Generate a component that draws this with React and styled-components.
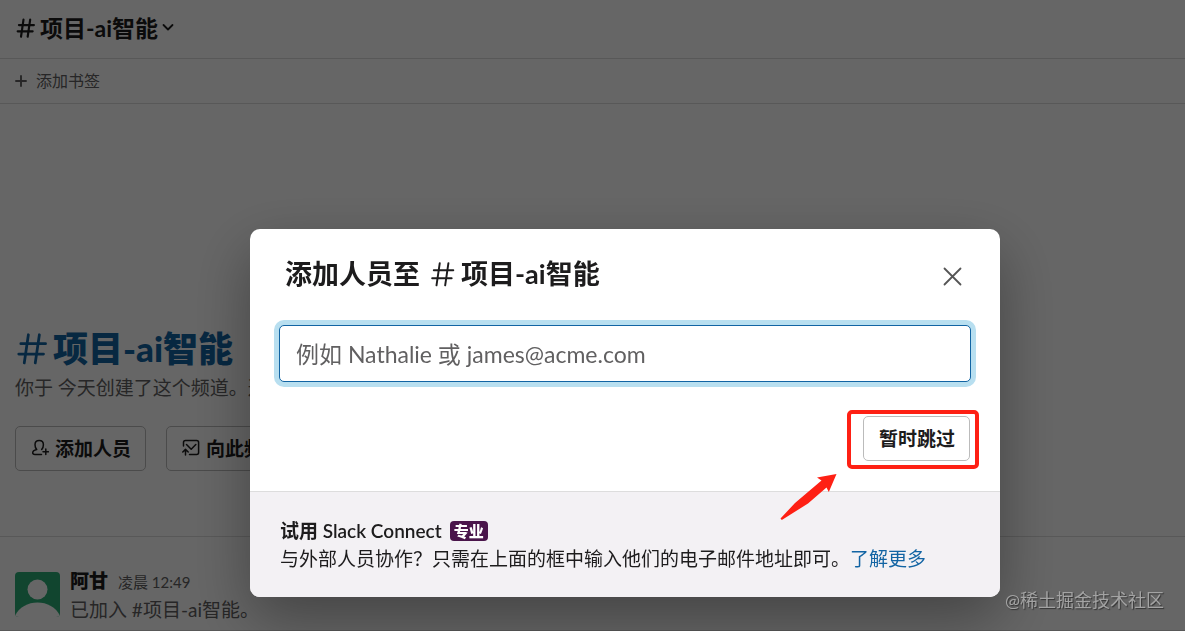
import React from 'react';
import styled, { createGlobalStyle } from 'styled-components';

const GlobalStyle = createGlobalStyle`
    * {
        box-sizing: border-box;
    }
    body {
        margin: 0;
        background: #fff;
        color: #1d1c1d;
        font-family: Lato, 'Noto Sans CJK SC', sans-serif;
        font-size: 19px;
        line-height: 28px;
    }
    h1, h2, h3, p {
        margin: 0;
    }
    button, input {
        font-family: inherit;
        color: inherit;
    }
    svg {
        display: block;
        flex: none;
    }
`;

const Page = styled.div`
    display: flex;
    flex-direction: column;
    min-height: 100vh;
`;

const ChannelHeader = styled.header`
    display: flex;
    align-items: center;
    height: 59px;
    padding: 0 16px 2px;
    border-bottom: 1px solid #ddd;
`;

const ChannelButton = styled.button`
    display: flex;
    align-items: center;
    gap: 4px;
    padding: 0;
    border: 0;
    background: none;
    font-size: 23px;
    font-weight: 700;
    line-height: 28px;
`;

const BookmarkBar = styled.div`
    display: flex;
    align-items: center;
    height: 45px;
    padding: 0 15px;
    border-bottom: 1px solid #ddd;
`;

const BookmarkButton = styled.button`
    display: flex;
    align-items: center;
    gap: 9px;
    padding: 0;
    border: 0;
    background: none;
    color: #616061;
    font-size: 16px;
    line-height: 24px;
`;

const Messages = styled.main`
    flex: 1;
    display: flex;
    flex-direction: column;
    justify-content: flex-end;
`;

const Intro = styled.section`
    padding: 0 15px 65px;
    border-bottom: 1px solid #ddd;
`;

const IntroTitle = styled.h1`
    display: flex;
    align-items: center;
    gap: 4px;
    padding-left: 1px;
    color: #1264a3;
    font-size: 35px;
    font-weight: 900;
    line-height: 52px;
`;

const IntroText = styled.p`
    color: #616061;
`;

const Actions = styled.div`
    display: flex;
    gap: 20px;
    margin-top: 24px;
`;

const Button = styled.button`
    display: flex;
    align-items: center;
    gap: 6px;
    height: 45px;
    padding: 0 14px 2px 15px;
    border: 1px solid #bbb;
    border-radius: 5px;
    background: #fff;
    font-size: 19px;
    font-weight: 700;
    white-space: nowrap;
`;

const Message = styled.article`
    display: flex;
    gap: 10px;
    padding: 30px 15px 6px;
    border-bottom: 1px solid #ddd;
`;

const AvatarIcon = styled.svg`
    margin-top: 5px;
    border-radius: 4px;
`;

const MessageHead = styled.div`
    display: flex;
    align-items: baseline;
    gap: 10px;
`;

const Author = styled.span`
    font-weight: 900;
`;

const Time = styled.time`
    color: #616061;
    font-size: 15px;
`;

const MessageText = styled.p`
    color: #616061;
`;

const Overlay = styled.div`
    position: fixed;
    inset: 0;
    display: flex;
    align-items: center;
    justify-content: center;
    padding: 195px 0 0 65px;
    background: rgba(0, 0, 0, 0.6);
`;

const Dialog = styled.section`
    width: 100%;
    max-width: 750px;
    border-radius: 10px;
    background: #fff;
    box-shadow: 0 22px 60px rgba(0, 0, 0, 0.35);
`;

const DialogHeader = styled.header`
    display: flex;
    align-items: center;
    justify-content: space-between;
    padding: 25px 35px 0;
`;

const DialogTitle = styled.h2`
    display: flex;
    align-items: center;
    font-size: 27px;
    font-weight: 700;
    line-height: 40px;
`;

const TitleIcon = styled.span`
    padding: 0 5px 0 10px;
`;

const CloseButton = styled.button`
    padding: 4px 0 0;
    border: 0;
    background: none;
`;

const DialogBody = styled.div`
    padding: 31px 29px 30px;
`;

const PeopleInput = styled.input`
    display: block;
    width: 100%;
    height: 57px;
    padding: 0 16px;
    border: 1px solid #1264a3;
    border-radius: 5px;
    box-shadow: 0 0 0 5px #b8dff0;
    font-size: 23px;
    outline: none;

    &::placeholder {
        color: #616061;
        opacity: 1;
    }
`;

const DialogActions = styled.div`
    display: flex;
    justify-content: flex-end;
    margin-top: 34px;
    padding-right: 1px;
`;

const Highlight = styled.div`
    position: relative;

    &::after {
        content: '';
        position: absolute;
        inset: -6px -9px -8px -16px;
        border: 4px solid #fe2014;
        border-radius: 5px;
        pointer-events: none;
    }
`;

const ArrowIcon = styled.svg`
    position: absolute;
    top: 57px;
    right: 133px;
`;

const DialogFooter = styled.footer`
    padding: 25px 30px 24px;
    border-top: 1px solid #ddd;
    border-radius: 0 0 10px 10px;
    background: #f3f1f4;
`;

const FooterTitle = styled.h3`
    display: flex;
    align-items: center;
    gap: 8px;
    font-size: 19px;
    font-weight: 600;
`;

const Badge = styled.span`
    padding: 0 4px;
    border-radius: 4px;
    background: #4a154b;
    color: #fff;
    font-size: 15px;
    font-weight: 900;
    line-height: 20px;
`;

const Link = styled.a`
    color: #1264a3;
    text-decoration: none;
`;

const Watermark = styled.div`
    position: fixed;
    right: 21px;
    bottom: 17px;
    color: #a3a3a3;
    font-size: 18px;
    text-shadow: 1px 1px 1px #333;
`;

const HashIcon = ({ size, stroke }) => (
    <svg width={size} height={size} viewBox="0 0 24 24" fill="none" stroke="currentColor" strokeWidth={stroke} strokeLinecap="round" aria-hidden="true">
        <path d="M3.500 8.500h18M2 16h18M9 2L6 22.500M17 2l-3 20.500" />
    </svg>
);

const ChevronIcon = () => (
    <svg width="14" height="14" viewBox="0 0 14 14" fill="none" stroke="currentColor" strokeWidth="1.8" strokeLinecap="round" strokeLinejoin="round" aria-hidden="true">
        <path d="M1.500 4l4.500 4.500L10.500 4" />
    </svg>
);

const PlusIcon = () => (
    <svg width="12" height="12" viewBox="0 0 12 12" fill="none" stroke="currentColor" strokeWidth="1.9" strokeLinecap="round" aria-hidden="true">
        <path d="M6 1v10M1 6h10" />
    </svg>
);

const AddPersonIcon = () => (
    <svg width="18" height="18" viewBox="0 0 18 18" fill="none" stroke="currentColor" strokeWidth="1.5" strokeLinecap="round" strokeLinejoin="round" aria-hidden="true">
        <path d="M10.500 15.500H4c-1.500 0-2.300-.6-2.300-1.700 0-1.700 1.700-2.800 4-3.300C4.700 9.300 4 7.700 4 5.700c0-2.500 1.600-4.200 4.200-4.200s4.200 1.700 4.200 4.200c0 2-.7 3.600-1.700 4.800M14.800 10v5.600M12 12.800h5.400" />
    </svg>
);

const SendMailIcon = () => (
    <svg width="18" height="18" viewBox="0 0 18 18" fill="none" stroke="currentColor" strokeWidth="1.5" strokeLinecap="round" strokeLinejoin="round" aria-hidden="true">
        <path d="M1.500 7V3.600c0-1.200.8-2 2-2h11.100c1.200 0 2 .8 2 2v9.800c0 1.200-.8 2-2 2H7.500M4.500 5.500l4.700 4.700L13.800 5.500M3.500 16v-5.500M.8 13l2.700-2.600L6.200 13" />
    </svg>
);

const CloseIcon = () => (
    <svg width="25" height="25" viewBox="0 0 25 25" fill="none" stroke="#555" strokeWidth="1.8" strokeLinecap="round" aria-hidden="true">
        <path d="M4.500 4.500l16 16M20.500 4.500l-16 16" />
    </svg>
);

const Avatar = () => (
    <AvatarIcon width="45" height="45" viewBox="0 0 45 45" aria-hidden="true">
        <path fill="#2bac76" d="M0 0h45v45H0z" />
        <circle cx="22.500" cy="17.500" r="10" fill="#fff" />
        <path fill="#fff" d="M0 45v-1c4-9 13-13.500 22.500-13.500S41 35 45 44v1z" />
    </AvatarIcon>
);

const Arrow = () => (
    <ArrowIcon width="57" height="48" viewBox="0 0 57 48" aria-hidden="true">
        <path fill="#fe2014" d="M56.500 1L37 4.500l4.500 3L15 30 .5 45.500 1.800 47 28 30.500 46.500 14.500l2.300 4.500z" />
    </ArrowIcon>
);

const InviteDialog = () => (
    <Overlay>
        <Dialog role="dialog" aria-modal="true" aria-labelledby="invite-title">
            <DialogHeader>
                <DialogTitle id="invite-title">
                    添加人员至
                    <TitleIcon>
                        <HashIcon size={26} stroke={1.8} />
                    </TitleIcon>
                    项目-ai智能
                </DialogTitle>
                <CloseButton type="button" aria-label="关闭">
                    <CloseIcon />
                </CloseButton>
            </DialogHeader>
            <DialogBody>
                <PeopleInput type="text" aria-labelledby="invite-title" placeholder="例如 Nathalie 或 james@acme.com" />
                <DialogActions>
                    <Highlight>
                        <Button type="button">暂时跳过</Button>
                        <Arrow />
                    </Highlight>
                </DialogActions>
            </DialogBody>
            <DialogFooter>
                <FooterTitle>
                    试用 Slack Connect
                    <Badge>专业</Badge>
                </FooterTitle>
                <p>
                    与外部人员协作？只需在上面的框中输入他们的电子邮件地址即可。<Link href="#more">了解更多</Link>
                </p>
            </DialogFooter>
        </Dialog>
    </Overlay>
);

const App = () => (
    <>
        <GlobalStyle />
        <Page lang="zh-CN">
            <ChannelHeader>
                <ChannelButton type="button">
                    <HashIcon size={20} stroke={2.6} />
                    项目-ai智能
                    <ChevronIcon />
                </ChannelButton>
            </ChannelHeader>
            <BookmarkBar>
                <BookmarkButton type="button">
                    <PlusIcon />
                    添加书签
                </BookmarkButton>
            </BookmarkBar>
            <Messages>
                <Intro>
                    <IntroTitle>
                        <HashIcon size={33} stroke={2} />
                        项目-ai智能
                    </IntroTitle>
                    <IntroText>你于 今天创建了这个频道。这是 #项目-ai智能 频道的最开始。</IntroText>
                    <Actions>
                        <Button type="button">
                            <AddPersonIcon />
                            添加人员
                        </Button>
                        <Button type="button">
                            <SendMailIcon />
                            向此频道发送电子邮件
                        </Button>
                    </Actions>
                </Intro>
                <Message>
                    <Avatar />
                    <div>
                        <MessageHead>
                            <Author>阿甘</Author>
                            <Time>凌晨 12:49</Time>
                        </MessageHead>
                        <MessageText>已加入 #项目-ai智能。</MessageText>
                    </div>
                </Message>
            </Messages>
        </Page>
        <InviteDialog />
        <Watermark>@稀土掘金技术社区</Watermark>
    </>
);

export default App;
